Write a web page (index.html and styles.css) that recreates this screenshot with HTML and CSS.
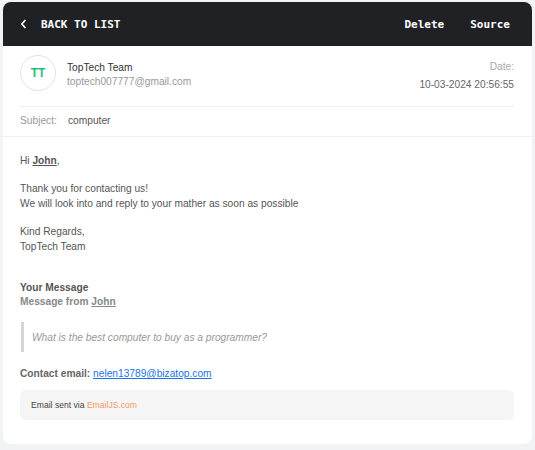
FILE: index.html
```html
<!DOCTYPE html>
<html>
<head>
<meta charset="utf-8">
<link rel="stylesheet" href="styles.css">
</head>
<body>
<div class="card">
  <div class="topbar">
    <a class="back">
      <svg class="chev" width="7" height="10" viewBox="0 0 7 10"><path d="M5.5 1 L1.8 5 L5.5 9" fill="none" stroke="#fff" stroke-width="1.6"/></svg>
      <span>BACK TO LIST</span>
    </a>
    <div class="actions">
      <span>Delete</span>
      <span>Source</span>
    </div>
  </div>

  <div class="sender">
    <div class="sender-row">
      <div class="avatar">TT</div>
      <div class="who">
        <div class="name">TopTech Team</div>
        <div class="addr">toptech007777@gmail.com</div>
      </div>
      <div class="date">
        <div class="date-label">Date:</div>
        <div class="date-val">10-03-2024 20:56:55</div>
      </div>
    </div>
  </div>

  <div class="subject">
    <span class="subject-label">Subject:</span>
    <span class="subject-val">computer</span>
  </div>

  <div class="content">
    <p>Hi <b class="u">John</b>,</p>
    <p>Thank you for contacting us!<br>We will look into and reply to your mather as soon as possible</p>
    <p>Kind Regards,<br>TopTech Team</p>
    <p class="yours"><b>Your Message</b><br><b class="from">Message from <span class="u">John</span></b></p>
    <blockquote>What is the best computer to buy as a programmer?</blockquote>
    <p class="contact"><b>Contact email:</b> <a class="mail">nelen13789@bizatop.com</a></p>
    <div class="footer">Email sent via <span class="ejs">EmailJS.com</span></div>
  </div>
</div>
</body>
</html>
```

FILE: styles.css
```css
html, body {
  margin: 0;
  padding: 0;
  background: #f2f3f5;
}
body {
  padding: 2px 3px 0 3px;
  font-family: "Liberation Sans", Arial, sans-serif;
}
.card {
  background: #fff;
  border-radius: 8px;
  overflow: hidden;
  padding-bottom: 24px;
}
.topbar {
  height: 44px;
  background: #202124;
  display: flex;
  align-items: center;
  justify-content: space-between;
  padding: 0 22px 0 17px;
  font-family: "DejaVu Sans Mono", monospace;
  font-weight: bold;
  font-size: 11px;
  color: #fff;
}
.back {
  display: flex;
  align-items: center;
}
.chev {
  margin-right: 14px;
}
.actions {
  display: flex;
  gap: 26px;
  padding-right: 0;
}
.sender {
  padding: 9px 18px 0 17px;
}
.sender-row {
  display: flex;
  align-items: flex-start;
  padding-bottom: 14px;
  border-bottom: 1px solid #efefef;
}
.avatar {
  width: 34px;
  height: 34px;
  border: 1px solid #e3e3e3;
  border-radius: 50%;
  display: flex;
  align-items: center;
  justify-content: center;
  color: #1fbf7b;
  font-weight: bold;
  font-size: 12px;
}
.who {
  margin-left: 11px;
  margin-top: 6px;
  font-size: 10.2px;
  line-height: 14px;
}
.name { color: #333; }
.addr { color: #999; }
.date {
  margin-left: auto;
  margin-top: 5px;
  text-align: right;
  font-size: 10.2px;
  line-height: 14px;
}
.date-label { color: #aaa; }
.date-val { color: #666; margin-top: 4px; }
.subject {
  padding: 7px 17px 8px 17px;
  border-bottom: 1px solid #efefef;
  font-size: 10.2px;
  line-height: 14px;
  display: flex;
}
.subject-label { color: #999; width: 48px; }
.subject-val { color: #555; }
.content {
  padding: 16px 18px 0 17px;
  font-size: 10.2px;
  line-height: 15px;
  color: #555;
}
.content p {
  margin: 0 0 13px 0;
}
.u { text-decoration: underline; }
.content p.yours {
  margin-top: 27px;
  line-height: 14px;
}
.from { color: #888; }
blockquote {
  margin: 0 0 14px 1px;
  border-left: 3px solid #d5d5d5;
  padding: 0 0 0 8px;
  height: 30px;
  display: flex;
  align-items: center;
  font-style: italic;
  color: #999;
}
.content p.contact {
  margin-bottom: 9px;
  color: #666;
}
.mail {
  color: #1a73e8;
  text-decoration: underline;
}
.footer {
  background: #f5f5f5;
  border-radius: 6px;
  padding: 8px 11px;
  font-size: 8.6px;
  line-height: 14px;
  color: #444;
}
.ejs { color: #f29a62; }
```
